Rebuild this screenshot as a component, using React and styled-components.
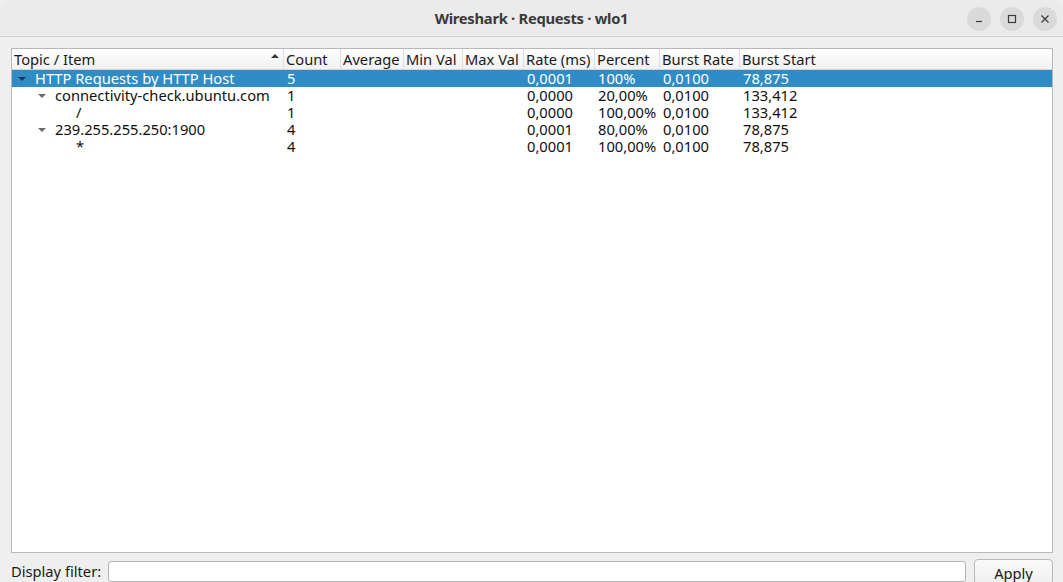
import React from 'react';
import styled, { createGlobalStyle } from 'styled-components';

const GlobalStyle = createGlobalStyle`
  html, body {
    margin: 0;
    padding: 0;
    background: #efefef;
    font-family: "Noto Sans", "DejaVu Sans", sans-serif;
    overflow: hidden;
  }
`;

const COLS = '272px 57px 63px 59px 61px 71px 65px 80px 1fr';
const FONT = '14.7px';

const Window = styled.div`
  width: 1063px;
  height: 582px;
  display: flex;
  flex-direction: column;
  background: #efefef;
  overflow: hidden;
`;

const TitleBar = styled.div`
  height: 36px;
  flex: none;
  display: flex;
  align-items: center;
  justify-content: center;
  position: relative;
  background: #ebebeb;
  border-bottom: 1px solid #cfcfcf;
  border-radius: 10px 10px 0 0;
`;

const Title = styled.div`
  font-size: 14.8px;
  font-weight: 700;
  color: #3a3a3a;
  letter-spacing: -0.3px;
`;

const Controls = styled.div`
  position: absolute;
  right: 6px;
  top: 7px;
  display: flex;
  gap: 9px;
`;

const CtlButton = styled.div`
  width: 24px;
  height: 24px;
  border-radius: 50%;
  background: #dadada;
  display: flex;
  align-items: center;
  justify-content: center;
`;

const Body = styled.div`
  flex: 1;
  display: flex;
  flex-direction: column;
  padding: 11px 10px 0 11px;
  min-height: 0;
`;

const Tree = styled.div`
  flex: 1;
  background: #ffffff;
  border: 1px solid #b9b9b9;
  display: flex;
  flex-direction: column;
  min-height: 0;
`;

const HeaderRow = styled.div`
  display: grid;
  grid-template-columns: ${COLS};
  height: 20px;
  background: linear-gradient(#ffffff, #f1f1f1);
  border-bottom: 1px solid #d6d6d6;
`;

const HeaderCell = styled.div`
  position: relative;
  display: flex;
  align-items: center;
  padding-left: 2px;
  font-size: ${FONT};
  line-height: 20px;
  color: #1a1a1a;
  white-space: nowrap;
  border-right: ${p => (p.$last ? 'none' : '1px solid #dedede')};
`;

const SortArrow = styled.span`
  position: absolute;
  right: 4px;
  top: 5px;
  width: 0;
  height: 0;
  border-left: 4px solid transparent;
  border-right: 4px solid transparent;
  border-bottom: 4px solid #3a3a3a;
`;

const Row = styled.div`
  display: grid;
  grid-template-columns: ${COLS};
  height: 17px;
  background: ${p => (p.$selected ? '#308cc6' : 'transparent')};
  color: ${p => (p.$selected ? '#ffffff' : '#101010')};
`;

const Cell = styled.div`
  display: flex;
  align-items: center;
  padding-left: ${p => (p.$indent != null ? p.$indent : 3)}px;
  font-size: ${FONT};
  line-height: 17px;
  white-space: nowrap;
`;

const Expander = styled.span`
  width: 0;
  height: 0;
  margin-right: 9px;
  border-left: 4px solid transparent;
  border-right: 4px solid transparent;
  border-top: 4px solid ${p => (p.$selected ? '#1f3550' : '#6a6a6a')};
`;

const Footer = styled.div`
  height: 29px;
  flex: none;
  display: flex;
  align-items: flex-start;
  gap: 7px;
`;

const Label = styled.div`
  font-size: ${FONT};
  line-height: 20px;
  color: #1a1a1a;
  white-space: nowrap;
  margin-top: 8px;
`;

const FilterInput = styled.input`
  flex: 1;
  height: 21px;
  box-sizing: border-box;
  border: 1px solid #b4b4b4;
  border-radius: 3px;
  background: #ffffff;
  outline: none;
  margin-top: 8px;
`;

const ApplyButton = styled.button`
  margin-left: 1px;
  width: 79px;
  height: 26px;
  margin-top: 6px;
  flex: none;
  box-sizing: border-box;
  border: 1px solid #b9b9b9;
  border-radius: 4px;
  background: linear-gradient(#fafafa, #efefef);
  font-family: "Noto Sans", "DejaVu Sans", sans-serif;
  font-size: ${FONT};
  line-height: 20px;
  color: #1a1a1a;
  padding: 2px 0 0;
`;

const columns = ['Topic / Item', 'Count', 'Average', 'Min Val', 'Max Val', 'Rate (ms)', 'Percent', 'Burst Rate', 'Burst Start'];

const rows = [
  { level: 0, expand: true, name: 'HTTP Requests by HTTP Host', count: '5', rate: '0,0001', pct: '100%', burst: '0,0100', start: '78,875', selected: true },
  { level: 1, expand: true, name: 'connectivity-check.ubuntu.com', count: '1', rate: '0,0000', pct: '20,00%', burst: '0,0100', start: '133,412' },
  { level: 2, name: '/', count: '1', rate: '0,0000', pct: '100,00%', burst: '0,0100', start: '133,412' },
  { level: 1, expand: true, name: '239.255.255.250:1900', count: '4', rate: '0,0001', pct: '80,00%', burst: '0,0100', start: '78,875' },
  { level: 2, name: '*', count: '4', rate: '0,0001', pct: '100,00%', burst: '0,0100', start: '78,875' },
];

const App = () => {
  return (
    <Window>
      <GlobalStyle />
      <TitleBar>
        <Title>Wireshark · Requests · wlo1</Title>
        <Controls>
          <CtlButton>
            <svg width="10" height="10" viewBox="0 0 10 10"><path d="M2 7.5h6" stroke="#3a3a3a" strokeWidth="1.2" /></svg>
          </CtlButton>
          <CtlButton>
            <svg width="10" height="10" viewBox="0 0 10 10"><rect x="1.5" y="1.5" width="7" height="7" fill="none" stroke="#3a3a3a" strokeWidth="1.2" /></svg>
          </CtlButton>
          <CtlButton>
            <svg width="10" height="10" viewBox="0 0 10 10"><path d="M1.5 1.5l7 7M8.5 1.5l-7 7" stroke="#3a3a3a" strokeWidth="1.2" /></svg>
          </CtlButton>
        </Controls>
      </TitleBar>
      <Body>
        <Tree>
          <HeaderRow>
            {columns.map((c, i) => (
              <HeaderCell key={c} $last={i === columns.length - 1}>
                {c}
                {i === 0 && <SortArrow />}
              </HeaderCell>
            ))}
          </HeaderRow>
          {rows.map((r, i) => (
            <Row key={i} $selected={r.selected}>
              <Cell $indent={r.expand ? 6 + r.level * 20 : 24 + r.level * 20}>
                {r.expand && <Expander $selected={r.selected} />}
                {r.name}
              </Cell>
              <Cell>{r.count}</Cell>
              <Cell />
              <Cell />
              <Cell />
              <Cell>{r.rate}</Cell>
              <Cell>{r.pct}</Cell>
              <Cell>{r.burst}</Cell>
              <Cell>{r.start}</Cell>
            </Row>
          ))}
        </Tree>
        <Footer>
          <Label>Display filter:</Label>
          <FilterInput />
          <ApplyButton>Apply</ApplyButton>
        </Footer>
      </Body>
    </Window>
  );
};

export default App;
